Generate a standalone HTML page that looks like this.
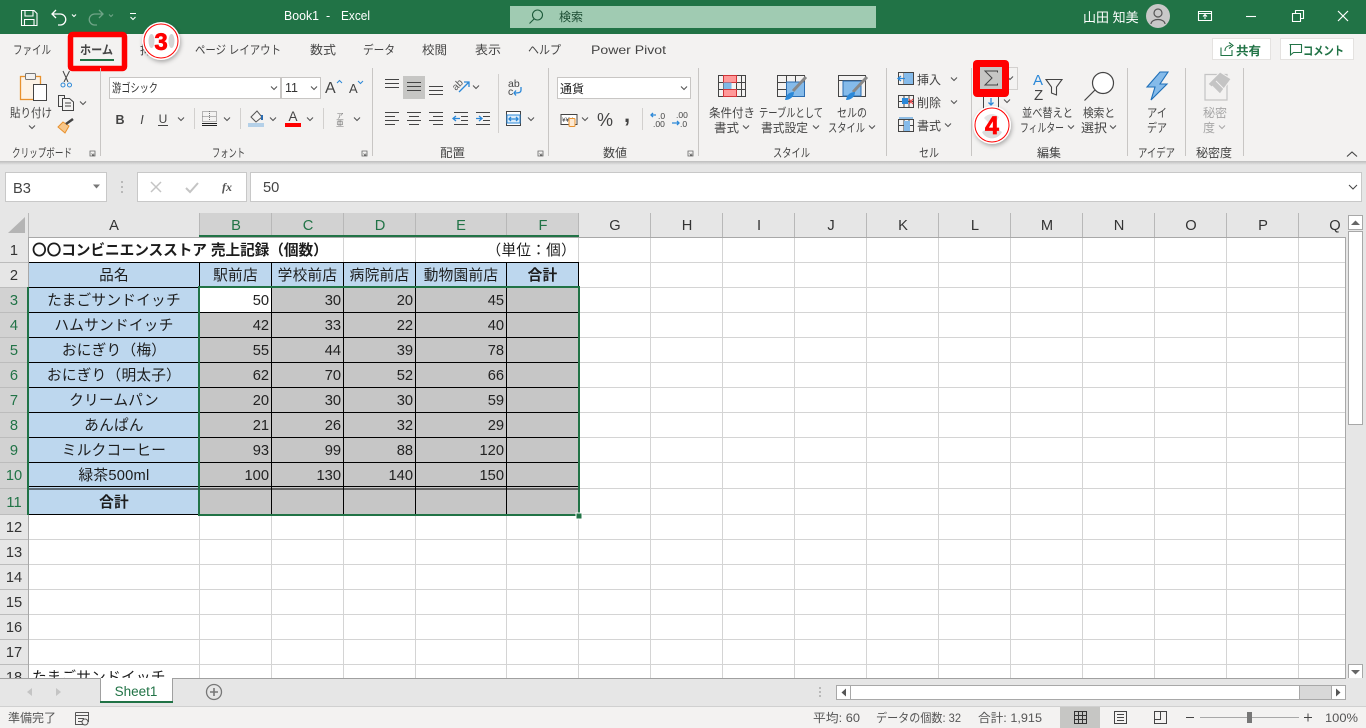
<!DOCTYPE html>
<html lang="ja"><head><meta charset="utf-8"><title>Book1 - Excel</title>
<style>
html,body{margin:0;padding:0;background:#fff;overflow:hidden}
svg{display:block;font-family:"Liberation Sans","Noto Sans CJK JP",sans-serif}
.r{font-size:12px;fill:#444}
.g{font-size:14.67px;fill:#1c1c1c;letter-spacing:.25px}
.m{text-anchor:middle}
.e{text-anchor:end}
.b{font-weight:bold}
.n{font-size:14.67px;fill:#222;text-anchor:end}
.h{font-size:14.67px;fill:#333;text-anchor:middle}
.hs{font-size:14.67px;fill:#217346;text-anchor:middle}
.s{font-size:12px;fill:#555}
.l{fill:none;stroke:#444;stroke-width:1}
.bl{fill:none;stroke:#2b88d8;stroke-width:1.3}
</style></head><body>
<svg width="1366" height="728" viewBox="0 0 1366 728" xmlns="http://www.w3.org/2000/svg">
<defs>
<path id="c" d="M-3 -1.5L0 1.5L3 -1.5" fill="none" stroke="#555" stroke-width="1.1"/>
<path id="d" d="M0 0H5V5H0ZM1.5 2.5L3.5 4.5M3.8 2.5V4.3H2" fill="none" stroke="#666" stroke-width=".8"/>
<filter id="sh" x="-30%" y="-30%" width="160%" height="160%"><feDropShadow dx="1" dy="2" stdDeviation="2" flood-color="#000" flood-opacity=".3"/></filter>
<linearGradient id="rs" x1="0" y1="0" x2="0" y2="1"><stop offset="0" stop-color="#bdbdbd"/><stop offset="1" stop-color="#e6e6e6"/></linearGradient>
</defs>

<!-- backgrounds -->
<rect width="1366" height="728" fill="#e6e6e6"/>
<rect width="1366" height="34" fill="#217346"/>
<rect y="34" width="1366" height="127" fill="#f3f2f1"/>
<rect y="161" width="1366" height="4" fill="url(#rs)"/>

<!-- title bar -->
<g fill="none" stroke="#fff" stroke-width="1.1">
<path d="M21.5 10.5H34L37 13.5V25.5H21.5ZM25 10.5V16H33V10.5M24.5 25.5V19.5H34V25.5"/>
<path d="M56 10L52 14L56 18M52 14H60A5.5 5.5 0 0 1 60.500 25H58" stroke-width="1.3"/>
<path d="M72 14.500L74 16.500L76 14.500"/>
<g stroke="#6fa487"><path d="M99 10L103 14L99 18M103 14H95A5.500 5.500 0 0 0 94.500 25H97" stroke-width="1.300"/><path d="M109 14.500L111 16.500L113 14.500"/></g>
<path d="M130 13.500H136M130.500 17L133 19.500L135.500 17"/>
</g>
<text x="284" y="20" font-size="12.500" fill="#fff" textLength="35" lengthAdjust="spacingAndGlyphs">Book1</text>
<text x="326" y="20" font-size="12.500" fill="#fff">-</text>
<text x="341" y="20" font-size="12.500" fill="#fff" textLength="29" lengthAdjust="spacingAndGlyphs">Excel</text>
<rect x="510" y="6" width="366" height="22" fill="#a0cbb2"/>
<g fill="none" stroke="#1c5a3a" stroke-width="1.100"><circle cx="537.500" cy="15" r="5"/><path d="M534 19L529.500 23.500"/></g>
<text x="559" y="21" font-size="12" fill="#1c4d33">検索</text>
<text x="1083" y="22" font-size="13" fill="#fff">山田 知美</text>
<circle cx="1158" cy="16" r="12" fill="#c8c8c8"/>
<g fill="none" stroke="#555" stroke-width="1.200"><circle cx="1158" cy="13" r="4"/><path d="M1151 24C1151.500 18 1164.500 18 1165 24"/></g>
<g fill="none" stroke="#fff" stroke-width="1.100">
<path d="M1198.500 11.500H1211.500V20.500H1198.500ZM1198.500 13.500H1211.500M1205 19V15M1203 16.500L1205 14.500L1207 16.500"/>
<path d="M1246 16.500H1256"/>
<path d="M1292.500 13.500H1300.500V21.500H1292.500ZM1295.500 13V10.500H1303.500V18.500H1301"/>
<path d="M1338 11L1348 21M1348 11L1338 21" stroke-width="1.200"/>
</g>

<!-- tabs -->
<g>
<text x="13" y="54" class="r" textLength="38" lengthAdjust="spacingAndGlyphs">ファイル</text>
<text x="195" y="54" class="r" textLength="86" lengthAdjust="spacingAndGlyphs">ページ レイアウト</text>
<text x="310" y="54" class="r" textLength="26" lengthAdjust="spacingAndGlyphs">数式</text>
<text x="363" y="54" class="r" textLength="32" lengthAdjust="spacingAndGlyphs">データ</text>
<text x="422" y="54" class="r" textLength="25" lengthAdjust="spacingAndGlyphs">校閲</text>
<text x="475" y="54" class="r" textLength="26" lengthAdjust="spacingAndGlyphs">表示</text>
<text x="528" y="54" class="r" textLength="33" lengthAdjust="spacingAndGlyphs">ヘルプ</text>
<text x="591" y="54" class="r" textLength="75" lengthAdjust="spacingAndGlyphs">Power Pivot</text>
</g>
<text x="80" y="54" class="r b" textLength="33" lengthAdjust="spacingAndGlyphs">ホーム</text>
<rect x="80" y="59" width="34" height="2" fill="#217346"/>
<rect x="70.500" y="34.500" width="54" height="34" rx="2" fill="none" stroke="#f00" stroke-width="5.500"/>
<text x="140" y="54" class="r">挿入</text>

<!-- share / comment -->
<rect x="1212.500" y="38.500" width="58" height="21" fill="#fff" stroke="#e4e2e0"/>
<rect x="1280.500" y="38.500" width="73" height="21" fill="#fff" stroke="#e4e2e0"/>
<path d="M1221 47.500V55.500H1232V50M1225 51C1225 47 1228 45.500 1231 45.500M1229 42.500L1233 45.500L1229 48.500" fill="none" stroke="#217346" stroke-width="1.100"/>
<text x="1236" y="55" font-size="12" font-weight="bold" fill="#217346" textLength="25" lengthAdjust="spacingAndGlyphs">共有</text>
<path d="M1289.500 44.500H1301.500V52.500H1293.500L1290.500 55V44.500Z" fill="none" stroke="#217346" stroke-width="1.100"/>
<text x="1303" y="55" font-size="12" font-weight="bold" fill="#217346" textLength="41" lengthAdjust="spacingAndGlyphs">コメント</text>

<!-- group separators -->
<path d="M100.500 68V156M372.500 68V156M548.500 68V156M698.500 68V156M886.500 68V156M971.500 68V156M1127.500 68V156M1185.500 68V156M1243.500 68V156" stroke="#c8c6c4" fill="none"/>
<path d="M194.500 108V129M240.500 108V129M323.500 108V129M498.500 74V133M642.500 108V130" stroke="#d2d0ce" fill="none"/>

<!-- group labels -->
<g>
<text x="12" y="157" class="r" textLength="60" lengthAdjust="spacingAndGlyphs">クリップボード</text>
<text x="212" y="157" class="r" textLength="33" lengthAdjust="spacingAndGlyphs">フォント</text>
<text x="440" y="157" class="r" textLength="25" lengthAdjust="spacingAndGlyphs">配置</text>
<text x="603" y="157" class="r" textLength="24" lengthAdjust="spacingAndGlyphs">数値</text>
<text x="773" y="157" class="r" textLength="37" lengthAdjust="spacingAndGlyphs">スタイル</text>
<text x="919" y="157" class="r" textLength="20" lengthAdjust="spacingAndGlyphs">セル</text>
<text x="1037" y="157" class="r" textLength="24" lengthAdjust="spacingAndGlyphs">編集</text>
<text x="1138" y="157" class="r" textLength="37" lengthAdjust="spacingAndGlyphs">アイデア</text>
<text x="1196" y="157" class="r" textLength="36" lengthAdjust="spacingAndGlyphs">秘密度</text>
</g>
<use href="#d" x="90" y="151"/><use href="#d" x="362" y="151"/><use href="#d" x="538" y="151"/><use href="#d" x="688" y="151"/>
<path d="M1347 156.500L1352 152L1357 156.500" fill="none" stroke="#444" stroke-width="1.100"/>

<!-- clipboard -->
<rect x="20.500" y="76.500" width="20" height="23" fill="#fdf3e6" stroke="#e8912d" stroke-width="1.300"/>
<rect x="25.500" y="73.500" width="10" height="6" rx="1" fill="#f3f2f1" stroke="#777"/>
<rect x="33.500" y="84.500" width="13" height="16" fill="#fff" stroke="#444"/>
<text x="10" y="117" class="r" textLength="42" lengthAdjust="spacingAndGlyphs">貼り付け</text>
<use href="#c" x="32" y="127"/>
<path d="M63 71L68 82M69.500 71L64 82" stroke="#444" fill="none"/>
<circle cx="63" cy="85" r="2" fill="none" stroke="#2b88d8"/><circle cx="69.500" cy="85" r="2" fill="none" stroke="#2b88d8"/>
<path d="M62 106.500H58.500V95.500H64.500V98M62.500 98.500H69.500L73.500 102V110.500H62.500ZM65 103H71M65 106H71" fill="none" stroke="#444"/>
<use href="#c" x="83" y="103"/>
<path d="M58 127L65 133L69 126L63 122Z" fill="#f8c78a" stroke="#e8912d"/>
<path d="M66 124L73 119" stroke="#444" stroke-width="2.500" fill="none"/>

<!-- font -->
<rect x="109.500" y="77.500" width="171" height="21" fill="#fff" stroke="#c8c6c4"/>
<rect x="281.500" y="77.500" width="39" height="21" fill="#fff" stroke="#c8c6c4"/>
<text x="112" y="92" font-size="12" fill="#333" textLength="46" lengthAdjust="spacingAndGlyphs">游ゴシック</text>
<text x="285" y="92" font-size="12.500" fill="#333">11</text>
<use href="#c" x="274" y="88"/><use href="#c" x="314" y="88"/>
<text x="325" y="93" font-size="16" fill="#444">A</text>
<path d="M337 83L339.500 80.500L342 83" fill="none" stroke="#2b88d8"/>
<text x="349" y="93" font-size="13" fill="#444">A</text>
<path d="M358 81L360.500 83.500L363 81" fill="none" stroke="#2b88d8"/>
<text x="120" y="124" font-size="12.500" font-weight="bold" class="m" fill="#444">B</text>
<text x="142" y="124" font-size="12.500" font-style="italic" class="m" fill="#444">I</text>
<text x="163" y="123" font-size="12" class="m" fill="#444">U</text>
<path d="M158 125.500H168" stroke="#444" fill="none"/>
<use href="#c" x="181" y="119"/>
<path d="M202.500 111.500H216.500V121.500H202.500ZM202.500 116.500H216.500M209.500 111V121" stroke="#777" stroke-dasharray="1 1" fill="none"/>
<path d="M202 123.500H217" stroke="#222" fill="none"/><path d="M202 125.500H217" stroke="#222" fill="none"/>
<use href="#c" x="227" y="119"/>
<path d="M251 117L257 111L262 117L256 122Z" fill="none" stroke="#555"/><path d="M262 115V120" stroke="#2b6cb0" stroke-width="2"/>
<rect x="248" y="123" width="16" height="4" fill="#b4d0e8"/>
<use href="#c" x="273" y="119"/>
<text x="293" y="121" font-size="13.500" class="m" fill="#444">A</text>
<rect x="285" y="123" width="16" height="4" fill="#f00"/>
<use href="#c" x="310" y="119"/>
<text x="340" y="118" font-size="7" class="m" fill="#777">ア</text>
<text x="340" y="126" font-size="8" class="m" fill="#777">亜</text>
<use href="#c" x="357" y="119"/>

<!-- alignment -->
<rect x="403" y="76" width="22" height="23" fill="#c6c6c4"/>
<path d="M385 79.500H399M385 83.500H399M385 87.500H399M407 82.500H421M407 86.500H421M407 90.500H421M429 86.500H443M429 90.500H443M429 94.500H443M385 112.500H399M385 116.500H395M385 120.500H399M385 124.500H395M407 112.500H421M409 116.500H419M407 120.500H421M409 124.500H419M429 112.500H443M433 116.500H443M429 120.500H443M433 124.500H443M454 112.500H468M461 116.500H468M461 120.500H468M454 124.500H468M476 112.500H490M483 116.500H490M483 120.500H490M476 124.500H490" stroke="#444" fill="none"/>
<path d="M453 118.500H460M456 116L453 118.500L456 121" class="bl"/>
<path d="M476 118.500H482M479 116L482 118.500L479 121" class="bl"/>
<text x="453" y="88" font-size="10" fill="#555" transform="rotate(-45 458 86)">ab</text>
<path d="M459 92L469 82M464 82H469V87" class="bl"/>
<use href="#c" x="476" y="87"/>
<text x="508" y="87" font-size="10.500" fill="#444">ab</text>
<text x="508" y="95" font-size="10.500" fill="#444">c</text>
<path d="M521 87V90C521 93 518 93 514 93M516 90.500L514 93L516 95.500" class="bl"/>
<rect x="506.500" y="111.500" width="14" height="14" fill="#fff" stroke="#444"/>
<rect x="507" y="115" width="13" height="8" fill="#dcecf9" stroke="#2b88d8"/>
<path d="M509 119H518M511 117L509 119L511 121M516 117L518 119L516 121" class="bl" stroke-width="1"/>
<use href="#c" x="531" y="119"/>

<!-- number -->
<rect x="557.500" y="77.500" width="133" height="21" fill="#fff" stroke="#c8c6c4"/>
<text x="560" y="93" font-size="12" fill="#222">通貨</text>
<use href="#c" x="684" y="88"/>
<rect x="561" y="114.500" width="16" height="10" fill="#fff" stroke="#444"/>
<text x="562" y="122" font-size="6.500" fill="#444">¥¥¥</text>
<rect x="569" y="118.500" width="6" height="8" rx="1" fill="#fde9d2" stroke="#e8912d"/>
<use href="#c" x="585" y="119"/>
<text x="605" y="126" font-size="18" class="m" fill="#444">%</text>
<text x="627" y="122" font-size="22" font-weight="bold" class="m" fill="#444">,</text>
<path d="M656 115H651M653 113L651 115L653 117" class="bl" stroke-width="1"/>
<text x="658" y="119" font-size="8.500" fill="#444">.0</text>
<text x="653" y="127" font-size="8.500" fill="#444">.00</text>
<text x="676" y="118" font-size="8.500" fill="#444">.00</text>
<path d="M672 123H679M677 121L679 123L677 125" class="bl" stroke-width="1"/>
<text x="680" y="127" font-size="8.500" fill="#444">.0</text>

<!-- styles -->
<g fill="none" stroke="#444">
<path d="M718.500 75.500H745.500V96.500H718.500ZM718.500 82.500H745.500M718.500 89.500H745.500M723.500 75.500V96.500M736.500 75.500V96.500M741.500 75.500V96.500"/>
</g>
<rect x="723.500" y="75.500" width="13" height="7" fill="#f99" stroke="#d13438"/>
<rect x="723.500" y="82.500" width="8" height="7" fill="#7fb9e6"/>
<rect x="723.500" y="89.500" width="13" height="7" fill="#f99" stroke="#d13438"/>
<g fill="none" stroke="#444"><path d="M777.500 75.500H804.500V96.500H777.500ZM777.500 82.500H804.500M777.500 89.500H804.500M786.500 75.500V96.500M795.500 75.500V96.500"/></g>
<rect x="786.500" y="82" width="18" height="14.500" fill="#85bbea" stroke="#2b6cb0"/>
<path d="M806 77L793 91" stroke="#888" stroke-width="3" fill="none"/>
<path d="M785 100C786 94 790 92 794 92C794 97 790 100 785 100Z" fill="#2b88d8"/>
<g fill="none" stroke="#444"><path d="M838.500 75.500H865.500V96.500H838.500ZM838.500 80.500H865.500"/></g>
<rect x="843" y="81" width="18" height="15" fill="#85bbea" stroke="#2b6cb0"/>
<path d="M867 77L853 92" stroke="#888" stroke-width="3" fill="none"/>
<path d="M846 100C847 94 851 92 855 92C855 97 851 100 846 100Z" fill="#2b88d8"/>
<text x="709" y="117" class="r" textLength="46" lengthAdjust="spacingAndGlyphs">条件付き</text>
<text x="714" y="132" class="r" textLength="25" lengthAdjust="spacingAndGlyphs">書式</text><use href="#c" x="746" y="127"/>
<text x="759" y="117" class="r" textLength="64" lengthAdjust="spacingAndGlyphs">テーブルとして</text>
<text x="761" y="132" class="r" textLength="47" lengthAdjust="spacingAndGlyphs">書式設定</text><use href="#c" x="816" y="127"/>
<text x="837" y="117" class="r" textLength="30" lengthAdjust="spacingAndGlyphs">セルの</text>
<text x="828" y="132" class="r" textLength="37" lengthAdjust="spacingAndGlyphs">スタイル</text><use href="#c" x="872" y="127"/>

<!-- cells -->
<g fill="none" stroke="#444"><path d="M898.500 72.500H913.500V84.500H898.500ZM898.500 78.500H913.500M904 72.500V84.500M909 72.500V84.500"/><path d="M898.500 95.500H913.500V107.500H898.500ZM898.500 101.500H913.500M904 95.500V107.500M909 95.500V107.500"/><path d="M898.500 119.500H913.500V131.500H898.500ZM898.500 125.500H913.500M904 119.500V131.500M909 119.500V131.500"/></g>
<rect x="904" y="73" width="9" height="11" fill="#85bbea"/>
<path d="M898 78.500H905M901 76L898 78.500L901 81" class="bl" fill="none"/>
<rect x="902" y="98" width="6" height="6" fill="#2b88d8"/>
<path d="M909 99L913 104M913 99L909 104" stroke="#e5484d" stroke-width="1.200" fill="none"/>
<rect x="904" y="121" width="6" height="10" fill="#85bbea"/>
<path d="M899 118H913" stroke="#2b88d8" fill="none"/>
<text x="917" y="84" class="r" textLength="24" lengthAdjust="spacingAndGlyphs">挿入</text><use href="#c" x="954" y="79"/>
<text x="917" y="107" class="r" textLength="24" lengthAdjust="spacingAndGlyphs">削除</text><use href="#c" x="954" y="102"/>
<text x="917" y="130" class="r" textLength="24" lengthAdjust="spacingAndGlyphs">書式</text><use href="#c" x="948" y="125"/>

<!-- editing -->
<rect x="1003.500" y="67.500" width="14" height="22" fill="none" stroke="#d2d0ce"/>
<use href="#c" x="1010" y="78"/>
<rect x="973" y="60" width="36" height="37" rx="4" fill="#f00"/>
<rect x="980" y="67" width="22" height="22" fill="#c6c6c4"/>
<path d="M997.500 72.500V71H985L992 78L985 85H997.500V83.500" fill="none" stroke="#444"/>
<path d="M983.500 97V109.500H998.500V97" fill="none" stroke="#444"/>
<path d="M991 98V105M988.500 102.500L991 105L993.500 102.500" class="bl"/>
<use href="#c" x="1007" y="101"/>
<text x="1033" y="85" font-size="15" fill="#2b88d8">A</text>
<text x="1034" y="100" font-size="15" fill="#444">Z</text>
<path d="M1046 79.500H1062L1056.500 87V95L1051.500 93V87Z" fill="none" stroke="#444" stroke-width="1.100"/>
<circle cx="1103" cy="83" r="10.500" fill="#fff" stroke="#444" stroke-width="1.200"/>
<path d="M1095 90L1084.500 100.500" stroke="#444" stroke-width="1.200" fill="none"/>
<text x="1022" y="117" class="r" textLength="51" lengthAdjust="spacingAndGlyphs">並べ替えと</text>
<text x="1020" y="132" class="r" textLength="44" lengthAdjust="spacingAndGlyphs">フィルター</text><use href="#c" x="1071" y="127"/>
<text x="1083" y="117" class="r" textLength="32" lengthAdjust="spacingAndGlyphs">検索と</text>
<text x="1081" y="132" class="r" textLength="26" lengthAdjust="spacingAndGlyphs">選択</text><use href="#c" x="1113" y="127"/>
<path d="M1160 72H1168L1160 84H1167L1151 100L1155 87H1147Z" fill="#85bbea" stroke="#1e6fb8" stroke-width="1.100"/>
<text x="1147" y="117" class="r" textLength="20" lengthAdjust="spacingAndGlyphs">アイ</text>
<text x="1147" y="132" class="r" textLength="20" lengthAdjust="spacingAndGlyphs">デア</text>
<path d="M1205 74.500H1227V100H1205Z" fill="none" stroke="#c4c4c4" stroke-width="1.200"/>
<path d="M1208 84L1220 72L1231 79L1220 94Z" fill="#c4c4c4" stroke="#f3f2f1"/>
<path d="M1212 86L1220 94M1216 81L1224 89" stroke="#f3f2f1"/>
<text x="1203" y="117" font-size="12" fill="#a6a6a6" textLength="24" lengthAdjust="spacingAndGlyphs">秘密</text>
<text x="1203" y="132" font-size="12" fill="#a6a6a6">度</text>
<path d="M1219 125.500L1222 128.500L1225 125.500" fill="none" stroke="#a6a6a6"/>

<!-- formula bar -->
<rect x="5.500" y="172.500" width="101" height="29" fill="#fff" stroke="#c8c8c8"/>
<text x="13" y="193" font-size="14.670" fill="#444">B3</text>
<path d="M93 184.500H100L96.500 188.500Z" fill="#777"/>
<path d="M122 181V183M122 186V188M122 191V193" stroke="#aaa" stroke-width="1.500" fill="none"/>
<rect x="137.500" y="172.500" width="109" height="29" fill="#fff" stroke="#c8c8c8"/>
<rect x="250.500" y="172.500" width="1111" height="29" fill="#fff" stroke="#c8c8c8"/>
<path d="M151 182L161 192M161 182L151 192" stroke="#c4c4c4" stroke-width="1.500" fill="none"/>
<path d="M186 188L190 192L198 183" stroke="#c4c4c4" stroke-width="2" fill="none"/>
<text x="222" y="191" font-size="12" font-family="Liberation Serif" font-style="italic" font-weight="bold" fill="#555">fx</text>
<text x="263" y="192" font-size="14.670" fill="#444">50</text>
<path d="M1349 185L1353 189L1357 185" stroke="#444" fill="none"/>

<!-- column headers -->
<rect x="0" y="213" width="1346" height="24" fill="#e6e6e6"/>
<rect x="200" y="213" width="379" height="24" fill="#d2d2d2"/>
<path d="M8 233L25 217V233Z" fill="#b4b4b4"/>
<path d="M28.500 213V237M199.500 213V237M271.500 213V237M343.500 213V237M415.500 213V237M506.500 213V237M578.500 213V237M650.500 213V237M722.500 213V237M794.500 213V237M866.500 213V237M938.500 213V237M1010.500 213V237M1082.500 213V237M1154.500 213V237M1226.500 213V237M1298.500 213V237" stroke="#b8b8b8" fill="none"/>
<text x="114" y="230" class="h">A</text>
<text x="236" y="230" class="hs">B</text>
<text x="308" y="230" class="hs">C</text>
<text x="380" y="230" class="hs">D</text>
<text x="461" y="230" class="hs">E</text>
<text x="543" y="230" class="hs">F</text>
<text x="615" y="230" class="h">G</text>
<text x="687" y="230" class="h">H</text>
<text x="759" y="230" class="h">I</text>
<text x="831" y="230" class="h">J</text>
<text x="903" y="230" class="h">K</text>
<text x="975" y="230" class="h">L</text>
<text x="1047" y="230" class="h">M</text>
<text x="1119" y="230" class="h">N</text>
<text x="1191" y="230" class="h">O</text>
<text x="1263" y="230" class="h">P</text>
<text x="1335" y="230" class="h">Q</text>

<!-- sheet -->
<rect x="29" y="237" width="1316" height="441" fill="#fff"/>
<path d="M343.500 237V678M415.500 237V678M650.500 237V678M722.500 237V678M794.500 237V678M866.500 237V678M938.500 237V678M1010.500 237V678M1082.500 237V678M1154.500 237V678M1226.500 237V678M1298.500 237V678M199.500 262V678M271.500 262V678M506.500 262V678M578.500 237V678" stroke="#d4d4d4" fill="none"/>
<path d="M29 262.500H1345M29 287.500H1345M29 312.500H1345M29 337.500H1345M29 362.500H1345M29 387.500H1345M29 412.500H1345M29 437.500H1345M29 462.500H1345M29 488.500H1345M29 514.500H1345M29 539.500H1345M29 564.500H1345M29 589.500H1345M29 614.500H1345M29 639.500H1345M29 664.500H1345" stroke="#d4d4d4" fill="none"/>
<path d="M1345.500 237V678M29 237.500H1345" stroke="#a8a8a8" fill="none"/>

<!-- row headers -->
<rect x="0" y="237" width="28" height="441" fill="#e6e6e6"/>
<rect x="0" y="288" width="28" height="227" fill="#d2d2d2"/>
<path d="M0 262.500H28M0 287.500H28M0 312.500H28M0 337.500H28M0 362.500H28M0 387.500H28M0 412.500H28M0 437.500H28M0 462.500H28M0 488.500H28M0 514.500H28M0 539.500H28M0 564.500H28M0 589.500H28M0 614.500H28M0 639.500H28M0 664.500H28" stroke="#bcbcbc" fill="none"/>
<path d="M28.500 237V678" stroke="#a8a8a8" fill="none"/>
<g>
<text x="14" y="255" class="h">1</text>
<text x="14" y="280" class="h">2</text>
<text x="14" y="305" class="hs">3</text>
<text x="14" y="330" class="hs">4</text>
<text x="14" y="355" class="hs">5</text>
<text x="14" y="380" class="hs">6</text>
<text x="14" y="405" class="hs">7</text>
<text x="14" y="430" class="hs">8</text>
<text x="14" y="455" class="hs">9</text>
<text x="14" y="480" class="hs">10</text>
<text x="14" y="507" class="hs">11</text>
<text x="14" y="532" class="h">12</text>
<text x="14" y="557" class="h">13</text>
<text x="14" y="582" class="h">14</text>
<text x="14" y="607" class="h">15</text>
<text x="14" y="632" class="h">16</text>
<text x="14" y="657" class="h">17</text>
<text x="14" y="682" class="h">18</text>
</g>

<!-- table fills -->
<rect x="29" y="262" width="550" height="26" fill="#bdd7ee"/>
<rect x="29" y="288" width="171" height="227" fill="#bdd7ee"/>
<rect x="200" y="288" width="379" height="227" fill="#c6c6c6"/>
<rect x="200" y="288" width="72" height="25" fill="#fff"/>

<!-- table borders -->
<path d="M29 262.500H579M29 287.500H579M29 312.500H579M29 337.500H579M29 362.500H579M29 387.500H579M29 412.500H579M29 437.500H579M29 462.500H579M29 486.500H579M29 489H579M29 514.500H579M199.500 262V515M271.500 262V515M343.500 262V515M415.500 262V515M506.500 262V515M578.500 262V515" stroke="#000" fill="none"/>

<!-- table text -->
<text x="32" y="255" class="g b" textLength="296">〇〇コンビニエンスストア 売上記録（個数）</text>
<text x="576" y="255" class="g e">（単位：個）</text>
<text x="114" y="280" class="g m">品名</text>
<text x="235.500" y="280" class="g m">駅前店</text>
<text x="307.500" y="280" class="g m">学校前店</text>
<text x="379.500" y="280" class="g m">病院前店</text>
<text x="461" y="280" class="g m">動物園前店</text>
<text x="542.500" y="280" class="g m b">合計</text>
<text x="114" y="305" class="g m">たまごサンドイッチ</text>
<text x="114" y="330" class="g m">ハムサンドイッチ</text>
<text x="114" y="355" class="g m">おにぎり（梅）</text>
<text x="114" y="380" class="g m">おにぎり（明太子）</text>
<text x="114" y="405" class="g m">クリームパン</text>
<text x="114" y="430" class="g m">あんぱん</text>
<text x="114" y="455" class="g m">ミルクコーヒー</text>
<text x="114" y="480" class="g m">緑茶500ml</text>
<text x="114" y="507" class="g m b">合計</text>
<text x="32" y="682" class="g">たまごサンドイッチ</text>

<text x="269" y="305" class="n">50</text><text x="341" y="305" class="n">30</text><text x="413" y="305" class="n">20</text><text x="504" y="305" class="n">45</text>
<text x="269" y="330" class="n">42</text><text x="341" y="330" class="n">33</text><text x="413" y="330" class="n">22</text><text x="504" y="330" class="n">40</text>
<text x="269" y="355" class="n">55</text><text x="341" y="355" class="n">44</text><text x="413" y="355" class="n">39</text><text x="504" y="355" class="n">78</text>
<text x="269" y="380" class="n">62</text><text x="341" y="380" class="n">70</text><text x="413" y="380" class="n">52</text><text x="504" y="380" class="n">66</text>
<text x="269" y="405" class="n">20</text><text x="341" y="405" class="n">30</text><text x="413" y="405" class="n">30</text><text x="504" y="405" class="n">59</text>
<text x="269" y="430" class="n">21</text><text x="341" y="430" class="n">26</text><text x="413" y="430" class="n">32</text><text x="504" y="430" class="n">29</text>
<text x="269" y="455" class="n">93</text><text x="341" y="455" class="n">99</text><text x="413" y="455" class="n">88</text><text x="504" y="455" class="n">120</text>
<text x="269" y="480" class="n">100</text><text x="341" y="480" class="n">130</text><text x="413" y="480" class="n">140</text><text x="504" y="480" class="n">150</text>

<!-- selection -->
<rect x="199" y="287" width="380" height="228" fill="none" stroke="#217346" stroke-width="2"/>
<rect x="576" y="513" width="6" height="6" fill="#217346" stroke="#fff"/>
<rect x="199" y="235" width="380" height="2" fill="#217346"/>
<rect x="27" y="287" width="2" height="228" fill="#217346"/>

<!-- badges -->
<g filter="url(#sh)"><circle cx="161" cy="41" r="19" fill="#fff"/></g>
<circle cx="161" cy="41" r="17" fill="#fff" stroke="#f00" stroke-width="1"/>
<ellipse cx="151.500" cy="41" rx="3" ry="7" fill="#d4d4d4"/><ellipse cx="171.500" cy="41" rx="3" ry="7" fill="#d4d4d4"/>
<text x="161" y="50" font-size="24" font-weight="bold" class="m" fill="#f00" stroke="#f00" stroke-width=".7">3</text>
<g filter="url(#sh)"><circle cx="992" cy="125" r="19" fill="#fff"/></g>
<circle cx="992" cy="125" r="17" fill="#fff" stroke="#f00" stroke-width="1"/>
<path d="M982 132A11 11 0 0 0 1002 132L996 128H988Z" fill="#dcdcdc"/>
<path d="M984 118A10 10 0 0 1 999 117L996 122H988Z" fill="#e4e4e4"/>
<text x="992" y="134" font-size="25" font-weight="bold" class="m" fill="#f00" stroke="#f00" stroke-width=".7">4</text>

<!-- vertical scrollbar -->
<rect x="1346" y="213" width="20" height="465" fill="#e6e6e6"/>
<rect x="1348.500" y="215.500" width="14" height="14" fill="#fff" stroke="#a8a8a8"/>
<path d="M1351 225H1360L1355.500 220.500Z" fill="#666"/>
<rect x="1348.500" y="231.500" width="14" height="193" fill="#fff" stroke="#a8a8a8"/>
<rect x="1348.500" y="664.500" width="14" height="14" fill="#fff" stroke="#a8a8a8"/>
<path d="M1351 670H1360L1355.500 674.500Z" fill="#666"/>

<!-- tab bar -->
<rect x="0" y="678" width="1366" height="29" fill="#e6e6e6"/>
<path d="M0 678.500H1346" stroke="#a0a0a0" fill="none"/>
<path d="M32 688L27 692L32 696ZM56 688L61 692L56 696Z" fill="#c4c4c4"/>
<path d="M100.500 678V702H172.500V678" fill="#fff" stroke="#a0a0a0"/>
<rect x="100" y="701" width="73" height="2" fill="#217346"/>
<text x="136" y="696" font-size="13.500" class="m" fill="#217346">Sheet1</text>
<circle cx="214" cy="692" r="7.500" fill="none" stroke="#777" stroke-width="1.300"/>
<path d="M210 692H218M214 688V696" stroke="#777" stroke-width="1.600" fill="none"/>
<path d="M820 687V689M820 691V693M820 695V697" stroke="#aaa" stroke-width="1.500" fill="none"/>
<rect x="836" y="685" width="509" height="14.500" fill="#d8d8d8"/>
<rect x="836.500" y="685.500" width="508" height="14" fill="none" stroke="#a8a8a8"/>
<rect x="836.500" y="685.500" width="14" height="14" fill="#fff" stroke="#a8a8a8"/>
<rect x="850.500" y="685.500" width="449" height="14" fill="#fff" stroke="#a8a8a8"/>
<rect x="1331.500" y="685.500" width="14" height="14" fill="#fff" stroke="#a8a8a8"/>
<path d="M846 688.500V696.500L841.500 692.500ZM1336 688.500V696.500L1340.500 692.500Z" fill="#555"/>

<!-- status bar -->
<rect x="0" y="707" width="1366" height="21" fill="#f3f2f1"/>
<path d="M0 706.500H1366" stroke="#d0d0d0" fill="none"/>
<text x="8" y="722" class="s" textLength="48" lengthAdjust="spacingAndGlyphs">準備完了</text>
<path d="M75.500 712.500H88.500V722M75.500 712.500V724.500H83M75.500 715.500H88.500M78 718.500H84M78 721.500H82" fill="none" stroke="#555"/>
<circle cx="85" cy="722" r="3" fill="none" stroke="#555"/>
<text x="813" y="722" class="s" textLength="47" lengthAdjust="spacingAndGlyphs">平均: 60</text>
<text x="876" y="722" class="s" textLength="85" lengthAdjust="spacingAndGlyphs">データの個数: 32</text>
<text x="978" y="722" class="s" textLength="64" lengthAdjust="spacingAndGlyphs">合計: 1,915</text>
<rect x="1060" y="707" width="40" height="21" fill="#c6c6c4"/>
<path d="M1074.500 711.500H1086.500V723.500H1074.500ZM1074.500 715.500H1086.500M1074.500 719.500H1086.500M1078.500 711.500V723.500M1082.500 711.500V723.500" fill="none" stroke="#333"/>
<path d="M1114.500 711.500H1126.500V723.500H1114.500ZM1117 714.500H1124M1117 717.500H1124M1117 720.500H1124" fill="none" stroke="#444"/>
<path d="M1154.500 711.500H1166.500V723.500H1154.500ZM1154.500 719.500H1160.500V711.500" fill="none" stroke="#444"/>
<path d="M1186 717.500H1194M1304 717.500H1312M1308 713.500V721.500" stroke="#444" fill="none"/>
<path d="M1200 717.500H1299" stroke="#a8a8a8" fill="none"/>
<rect x="1247" y="712" width="5" height="11" fill="#777"/>
<text x="1325" y="722" class="s" textLength="33" lengthAdjust="spacingAndGlyphs">100%</text>
</svg>
</body></html>
